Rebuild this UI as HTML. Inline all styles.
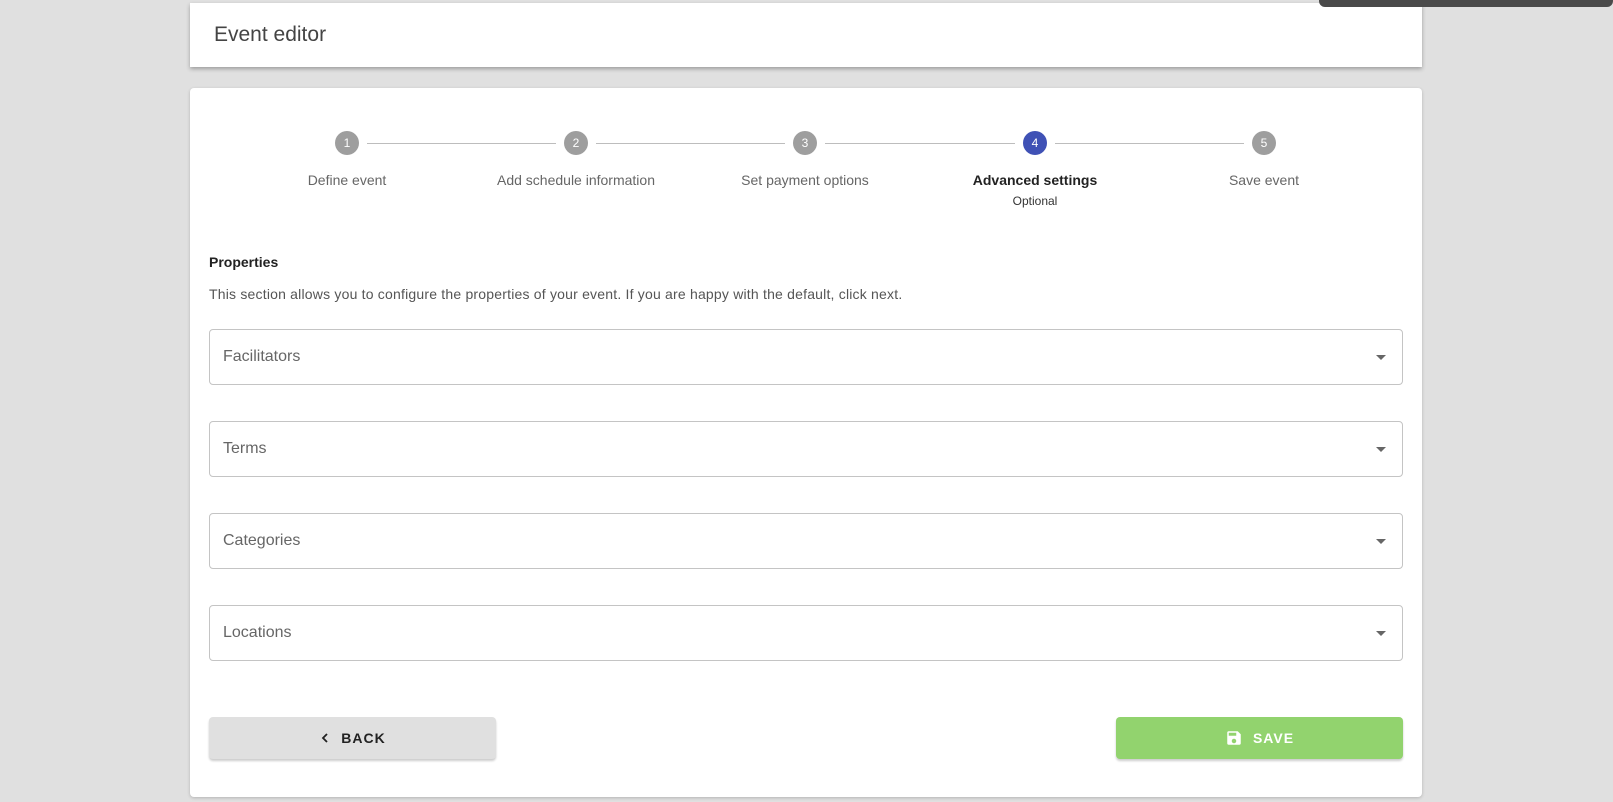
<!DOCTYPE html>
<html><head><meta charset="utf-8"><style>
*{box-sizing:border-box;margin:0;padding:0}
body{width:1613px;height:802px;background:#e0e0e0;font-family:"Liberation Sans",sans-serif;position:relative;overflow:hidden}
.abs{position:absolute}
.hdr{left:190px;top:3px;width:1232px;height:64px;background:#fff;box-shadow:0 2px 4px rgba(0,0,0,.3)}
.hdr span{position:absolute;left:24px;top:20px;font-size:21px;color:#444;font-weight:300}
.bar{left:1319px;top:0;width:294px;height:7px;background:#4a4a4a;border-radius:0 0 6px 6px}
.card{left:190px;top:88px;width:1232px;height:709px;background:#fff;border-radius:4px;box-shadow:0 1px 3px rgba(0,0,0,.2)}
.c{width:24px;height:24px;border-radius:50%;background:#9e9e9e;color:#fff;font-size:12px;text-align:center;line-height:24px;top:131px}
.ln{height:1px;background:#bdbdbd;top:143px}
.lb{top:172px;width:220px;text-align:center;font-size:14px;color:#666}
.f{left:209px;width:1194px;height:56px;border:1px solid #c4c4c4;border-radius:4px}
.f span{position:absolute;left:13px;top:18px;font-size:16px;color:#666}
.f i{position:absolute;right:16px;top:25px;width:0;height:0;border-left:5px solid transparent;border-right:5px solid transparent;border-top:5px solid #666}
.btn{top:717px;width:287px;height:42px;border-radius:4px;font-size:14px;font-weight:bold;letter-spacing:1px;display:flex;align-items:center;justify-content:center;gap:10px;box-shadow:0 2px 2px rgba(0,0,0,.2)}
</style></head><body>
<div class="abs hdr"><span>Event editor</span></div>
<div class="abs bar"></div>
<div class="abs card"></div>
<div class="abs ln" style="left:367px;width:189px"></div>
<div class="abs ln" style="left:596px;width:189px"></div>
<div class="abs ln" style="left:825px;width:190px"></div>
<div class="abs ln" style="left:1055px;width:189px"></div>
<div class="abs c" style="left:335px">1</div>
<div class="abs c" style="left:564px">2</div>
<div class="abs c" style="left:793px">3</div>
<div class="abs c" style="left:1023px;background:#3f51b5">4</div>
<div class="abs c" style="left:1252px">5</div>
<div class="abs lb" style="left:237px">Define event</div>
<div class="abs lb" style="left:466px">Add schedule information</div>
<div class="abs lb" style="left:695px">Set payment options</div>
<div class="abs lb" style="left:925px;color:#222;font-weight:bold">Advanced settings</div>
<div class="abs lb" style="left:925px;top:194px;font-size:12px;color:#333">Optional</div>
<div class="abs lb" style="left:1154px">Save event</div>
<div class="abs" style="left:209px;top:254px;font-size:14px;font-weight:bold;color:#222">Properties</div>
<div class="abs" style="left:209px;top:286px;font-size:14px;color:#555;letter-spacing:.2px">This section allows you to configure the properties of your event. If you are happy with the default, click next.</div>
<div class="abs f" style="top:329px"><span>Facilitators</span><i></i></div>
<div class="abs f" style="top:421px"><span>Terms</span><i></i></div>
<div class="abs f" style="top:513px"><span>Categories</span><i></i></div>
<div class="abs f" style="top:605px"><span>Locations</span><i></i></div>
<div class="abs btn" style="left:209px;background:#e0e0e0;color:#222"><svg width="12" height="12" viewBox="0 0 12 12"><path d="M8 2L4 6l4 4" stroke="#222" stroke-width="1.8" fill="none"/></svg>BACK</div>
<div class="abs btn" style="left:1116px;background:#92d36e;color:#fff"><svg width="18" height="18" viewBox="0 0 24 24"><path fill="#fff" d="M17 3H5a2 2 0 0 0-2 2v14a2 2 0 0 0 2 2h14a2 2 0 0 0 2-2V7l-4-4zm-5 16a3 3 0 1 1 0-6 3 3 0 0 1 0 6zm3-10H5V5h10v4z"/></svg>SAVE</div>
</body></html>
